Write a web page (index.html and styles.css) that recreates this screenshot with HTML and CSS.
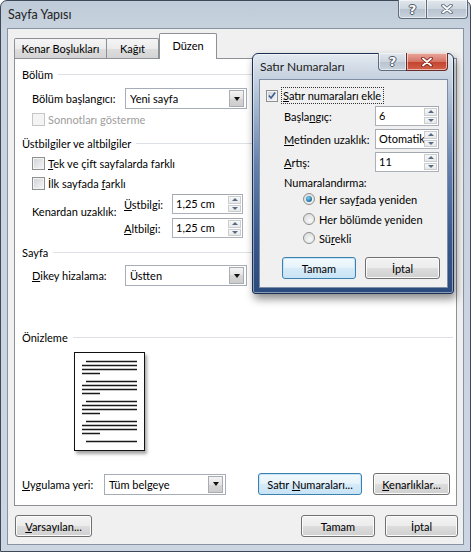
FILE: index.html
```html
<!DOCTYPE html>
<html lang="tr">
<head>
<meta charset="utf-8">
<title>Sayfa Yapısı</title>
<link rel="stylesheet" href="styles.css">
</head>
<body>
<div class="window">
  <div class="titlebar">
    <span class="title">Sayfa Yapısı</span>
    <div class="caption">
      <span class="capbtn help">?</span>
      <span class="capbtn close"><svg width="12" height="10" viewBox="0 0 12 10"><path d="M2 1.5 L10 8.5 M10 1.5 L2 8.5" stroke="#5b6776" stroke-width="3.6" stroke-linecap="round"/><path d="M2 1.5 L10 8.5 M10 1.5 L2 8.5" stroke="#fff" stroke-width="1.8" stroke-linecap="round"/></svg></span>
    </div>
  </div>
  <div class="client">
    <div class="tabs">
      <span class="tab t-kenar">Kenar Boşlukları</span>
      <span class="tab t-kagit">Kağıt</span>
      <span class="tab active t-duzen">Düzen</span>
    </div>
    <div class="panel">
      <div class="head">Bölüm</div>
      <div class="row ind r-start">
        <span class="lbl l-93">Bölüm başlan<u>g</u>ıcı:</span>
        <div class="combo"><span class="cval">Yeni sayfa</span><span class="ddbtn"><span class="tri"></span></span></div>
      </div>
      <div class="row ind chkrow r-sonnot">
        <span class="chk disabled"></span><span class="dtext">Sonnotları gösterme</span>
      </div>
      <div class="head h-ust">Üstbilgiler ve altbilgiler</div>
      <div class="row ind chkrow r-tek">
        <span class="chk"></span><span><u>T</u>ek ve çift sayfalarda farklı</span>
      </div>
      <div class="row ind chkrow r-ilk">
        <span class="chk"></span><span>İlk sayfada <u>f</u>arklı</span>
      </div>
      <div class="kenar ind">
        <span class="lbl l-92 kenar-lbl">Kenardan uzaklık:</span>
        <div class="spins">
          <div class="srow">
            <span class="lbl l-48"><u>Ü</u>stbilgi:</span>
            <div class="spin w-71"><span class="sval">1,25 cm</span><span class="spb"><span class="sup"><i class="up"></i></span><span class="sdn"><i class="dn"></i></span></span></div>
          </div>
          <div class="srow">
            <span class="lbl l-48"><u>A</u>ltbilgi:</span>
            <div class="spin w-71"><span class="sval">1,25 cm</span><span class="spb"><span class="sup"><i class="up"></i></span><span class="sdn"><i class="dn"></i></span></span></div>
          </div>
        </div>
      </div>
      <div class="head h-sayfa">Sayfa</div>
      <div class="row ind r-dikey">
        <span class="lbl l-93"><u>D</u>ikey hizalama:</span>
        <div class="combo"><span class="cval">Üstten</span><span class="ddbtn"><span class="tri"></span></span></div>
      </div>
      <div class="head h-oniz">Önizleme</div>
      <div class="preview">
        <div class="page">
          <svg width="69" height="97" viewBox="0 0 69 97">
            <g stroke="#1a1a1a" stroke-width="1.4">
              <path d="M11 8.5 H62 M7 12.5 H62 M7 16.5 H62 M7 20.5 H25"/>
              <path d="M11 28.5 H62 M7 32.5 H62 M7 36.5 H62 M7 40.5 H25"/>
              <path d="M11 48.5 H62 M7 52.5 H62 M7 56.5 H62 M7 60.5 H25"/>
              <path d="M11 68.5 H62 M7 72.5 H62 M7 76.5 H62 M7 80.5 H25"/>
              <path d="M11 88.5 H62"/>
            </g>
          </svg>
        </div>
      </div>
      <div class="row r-apply">
        <span class="lbl l-82"><u>U</u>ygulama yeri:</span>
        <div class="combo"><span class="cval">Tüm belgeye</span><span class="ddbtn"><span class="tri"></span></span></div>
        <span class="btn default b-satir"><span>Satır <u>N</u>umaraları...</span></span>
        <span class="btn b-kenar"><span><u>K</u>enarlıklar...</span></span>
      </div>
    </div>
    <div class="footer">
      <span class="btn b-vars"><span><u>V</u>arsayılan...</span></span>
      <span class="spacer"></span>
      <span class="btn b-ok"><span>Tamam</span></span>
      <span class="btn b-cancel"><span>İptal</span></span>
    </div>
  </div>

  <div class="subdlg">
    <div class="sub-title">
      <span class="sub-caption-text">Satır Numaraları</span>
      <div class="caption sub-caption">
        <span class="capbtn help sub-help">?</span>
        <span class="capbtn close red"><svg width="12" height="10" viewBox="0 0 12 10"><path d="M2 1.5 L10 8.5 M10 1.5 L2 8.5" stroke="#7a2118" stroke-width="3.6" stroke-linecap="round"/><path d="M2 1.5 L10 8.5 M10 1.5 L2 8.5" stroke="#fff" stroke-width="1.8" stroke-linecap="round"/></svg></span>
      </div>
    </div>
    <div class="sub-client">
      <div class="sub-chk">
        <span class="chk checked"><svg width="11" height="11" viewBox="0 0 11 11"><path d="M2 5.5 L4.5 8.3 L9 2.2" fill="none" stroke="#3d5f90" stroke-width="1.8"/></svg></span>
        <span class="focus"><u>S</u>atır numaraları ekle</span>
      </div>
      <div class="frow f1">
        <span class="flbl">Başla<u>n</u>gıç:</span>
        <div class="spin w-64"><span class="sval">6</span><span class="spb"><span class="sup"><i class="up"></i></span><span class="sdn"><i class="dn"></i></span></span></div>
      </div>
      <div class="frow">
        <span class="flbl"><u>M</u>etinden uzaklık:</span>
        <div class="spin w-64"><span class="sval">Otomatik</span><span class="spb"><span class="sup"><i class="up"></i></span><span class="sdn"><i class="dn"></i></span></span></div>
      </div>
      <div class="frow">
        <span class="flbl"><u>A</u>rtış:</span>
        <div class="spin w-64"><span class="sval">11</span><span class="spb"><span class="sup"><i class="up"></i></span><span class="sdn"><i class="dn"></i></span></span></div>
      </div>
      <div class="numhead">Numaralandırma:</div>
      <div class="radrow rr1"><span class="radio on"></span><span>Her say<u>f</u>ada yeniden</span></div>
      <div class="radrow rr2"><span class="radio"></span><span>Her bölümde yeniden</span></div>
      <div class="radrow rr3"><span class="radio"></span><span>Sü<u>r</u>ekli</span></div>
      <div class="sub-btns">
        <span class="btn default sb-ok"><span>Tamam</span></span>
        <span class="btn sb-cancel"><span>İptal</span></span>
      </div>
    </div>
  </div>
</div>
</body>
</html>
```

FILE: styles.css
```css
* { box-sizing: border-box; }
html, body { margin: 0; padding: 0; }
body {
  width: 471px;
  height: 552px;
  overflow: hidden;
  background: #ffffff;
  font-family: "Lato", "Noto Sans", sans-serif;
  font-size: 11px;
  color: #000;
}
u { text-decoration: underline; text-underline-offset: 1px; }

.window {
  position: relative;
  width: 471px;
  height: 552px;
  border: 1px solid #3e4856;
  border-radius: 7px 7px 0 0;
  background: linear-gradient(#bfcbd8, #c8d3df 30px, #cbd6e2);
  display: flex;
  flex-direction: column;
}
.titlebar {
  height: 27px;
  flex: none;
  display: flex;
  justify-content: space-between;
  align-items: flex-start;
  padding-left: 7px;
}
.title {
  font-size: 12.5px;
  line-height: 27px;
  color: #222;
}
.caption {
  display: flex;
  margin-top: -1px;
  margin-right: 2px;
}
.capbtn {
  height: 19px;
  display: flex;
  align-items: center;
  justify-content: center;
  border: 1px solid #5f6c7c;
  border-top: none;
  background: linear-gradient(#e2e7ed, #cdd5df 50%, #b8c3d0 50%, #c9d2dd);
  box-shadow: inset 0 0 0 1px rgba(255,255,255,0.55);
}
.capbtn.help {
  width: 28px;
  border-radius: 0 0 0 4px;
  border-right: none;
  color: #fff;
  font-family: "DejaVu Sans", sans-serif;
  font-weight: bold;
  font-size: 13px;
  text-shadow: 0 0 1px #4d5866, 1px 0 0 #4d5866, -1px 0 0 #4d5866, 0 1px 0 #4d5866, 0 -1px 0 #4d5866;
}
.capbtn.close {
  width: 42px;
  border-radius: 0 0 4px 0;
}

.client {
  flex: 1;
  margin: 0 6px 6px 6px;
  border: 1px solid #8793a3;
  background: #f0f0f0;
  display: flex;
  flex-direction: column;
  padding: 4px 0 7px 0;
}
.tabs {
  height: 25px;
  flex: none;
  display: flex;
  align-items: flex-end;
  padding-left: 6px;
}
.tab {
  height: 20px;
  border: 1px solid #8d9096;
  border-bottom: none;
  border-radius: 2px 2px 0 0;
  background: linear-gradient(#f5f5f5, #ececec 50%, #dedede 50%, #d4d4d4);
  text-align: center;
  line-height: 19px;
  margin-right: -1px;
}
.t-kenar { width: 93px; }
.t-kagit { width: 53px; }
.tab.active {
  position: relative;
  z-index: 1;
  height: 26px;
  margin-bottom: -1px;
  margin-left: 1px;
  width: 58px;
  background: #fff;
  line-height: 24px;
}

.panel {
  flex: 1;
  margin: 0 6px;
  border: 1px solid #8d9096;
  background: #fff;
  padding: 7px 3px 0 7px;
  display: flex;
  flex-direction: column;
}
.head {
  display: flex;
  align-items: center;
  height: 16px;
  gap: 5px;
}
.head::after {
  content: "";
  flex: 1;
  height: 1px;
  background: #dcdfe3;
}
.h-ust { margin-top: 8px; }
.h-sayfa { margin-top: 6px; }
.h-oniz { margin-top: 43px; }

.row { display: flex; align-items: center; }
.ind { margin-left: 10px; }
.r-start { height: 21px; margin-top: 6px; }
.r-sonnot { margin-top: 2px; }
.r-tek { margin-top: 4px; }
.r-ilk { margin-top: 4px; }
.r-dikey { height: 21px; margin-top: 5px; }
.chkrow { height: 16px; gap: 3px; }
.lbl { flex: none; white-space: nowrap; }
.l-93 { width: 93px; }
.l-92 { width: 92px; }
.l-48 { width: 48px; }
.l-82 { width: 82px; }
.dtext { color: #9d9d9d; }

.chk {
  width: 13px;
  height: 13px;
  flex: none;
  border: 1px solid #8e8f8f;
  background: linear-gradient(135deg, #cdd1d7, #f7f7f7);
  box-shadow: inset 0 0 0 1px #f3f3f3;
  display: flex;
  align-items: center;
  justify-content: center;
}
.chk.disabled {
  border-color: #c6c6c6;
  background: #f4f4f4;
  box-shadow: none;
}
.chk.checked { width: 12px; height: 12px; }

.combo {
  width: 122px;
  height: 21px;
  flex: none;
  border: 1px solid #a7adb6;
  background: #fff;
  display: flex;
  align-items: center;
  justify-content: space-between;
  padding: 1px;
}
.cval { padding-left: 3px; }
.ddbtn {
  width: 15px;
  height: 17px;
  border: 1px solid #a9adb3;
  background: linear-gradient(#f4f4f4, #e3e3e3 50%, #d6d6d6 50%, #cdcdcd);
  display: flex;
  align-items: center;
  justify-content: center;
  margin-right: 1px;
}
.tri {
  width: 0;
  height: 0;
  border-left: 3.5px solid transparent;
  border-right: 3.5px solid transparent;
  border-top: 4px solid #111;
}

.kenar {
  display: flex;
  margin-top: 3px;
  height: 44px;
}
.kenar-lbl { margin-top: 11px; }
.spins { display: flex; flex-direction: column; gap: 4px; }
.srow { display: flex; align-items: center; height: 20px; }

.spin {
  height: 20px;
  border: 1px solid #abb0b8;
  border-top-color: #a3a8b0;
  background: #fff;
  display: flex;
  align-items: stretch;
  justify-content: space-between;
  padding: 1px;
}
.w-71 { width: 71px; }
.w-64 { width: 64px; }
.sval { padding-left: 2px; line-height: 16px; white-space: nowrap; overflow: hidden; }
.spb {
  width: 13px;
  flex: none;
  display: flex;
  flex-direction: column;
  gap: 1px;
}
.sup, .sdn {
  flex: 1;
  border: 1px solid #c9ccd1;
  background: linear-gradient(#f7f7f7, #e8e8e8);
  display: flex;
  align-items: center;
  justify-content: center;
}
.up, .dn {
  display: block;
  width: 0;
  height: 0;
  border-left: 3px solid transparent;
  border-right: 3px solid transparent;
}
.up { border-bottom: 3px solid #566a86; }
.dn { border-top: 3px solid #566a86; }

.preview { margin-top: 7px; margin-left: 52px; height: 101px; }
.page {
  width: 71px;
  height: 99px;
  border: 1px solid #111;
  background: #fff;
  box-shadow: 2px 3px 3px rgba(0,0,0,0.35);
}
.page svg { display: block; }

.r-apply { margin-top: 20px; height: 22px; }
.b-satir { margin-left: 32px; width: 104px; }
.b-kenar { margin-left: 11px; width: 77px; }

.btn {
  height: 22px;
  flex: none;
  display: flex;
  align-items: center;
  justify-content: center;
  border: 1px solid #707070;
  border-radius: 3px;
  background: linear-gradient(#f3f3f3, #ececec 50%, #dddddd 50%, #d0d0d0);
  box-shadow: inset 0 0 0 1px #fbfbfb;
  white-space: nowrap;
}
.btn.default {
  border-color: #3c7fb1;
  background: linear-gradient(#f3f9fd, #e5f2fb 50%, #d6ebf8 50%, #c9e3f5);
  box-shadow: inset 0 0 0 1px #c6e6f8;
}

.footer {
  flex: none;
  display: flex;
  margin-top: 9px;
  padding: 0 5px 0 7px;
  height: 22px;
}
.spacer { flex: 1; }
.b-vars { width: 77px; }
.b-ok { width: 74px; }
.b-cancel { width: 73px; margin-left: 10px; }

/* Nested dialog window sitting on top of the main dialog */
.subdlg {
  position: absolute;
  left: 251px;
  top: 52px;
  width: 202px;
  height: 241px;
  border: 1px solid #1c2f52;
  border-radius: 6px 6px 3px 3px;
  background: linear-gradient(#e3e9f0, #cdd7e3 18px, #aebfd3 45px, #6582ad 110px, #3a5a8e 180px, #2b4a7e);
  box-shadow: 2px 5px 9px rgba(0,0,0,0.45), inset 0 0 0 1px rgba(255,255,255,0.45);
  display: flex;
  flex-direction: column;
  z-index: 5;
}
.sub-title {
  height: 25px;
  flex: none;
  display: flex;
  justify-content: space-between;
  align-items: flex-start;
  padding-left: 7px;
}
.sub-caption-text {
  font-size: 12px;
  line-height: 25px;
  color: #222;
}
.sub-caption { margin-right: 5px; margin-top: -1px; }
.sub-caption .capbtn { height: 18px; }
.sub-help { width: 27px; }
.capbtn.close.red {
  width: 42px;
  border-color: #6b2a25;
  background: linear-gradient(#e9a99d, #d47566 50%, #c2412d 50%, #d2614a);
}
.sub-client {
  flex: 1;
  margin: 0 5px 5px 6px;
  border: 1px solid #7d8ea6;
  background: #f0f0f0;
  display: flex;
  flex-direction: column;
}
.sub-chk {
  display: flex;
  align-items: center;
  height: 17px;
  margin-top: 7px;
  padding-left: 6px;
  gap: 3px;
}
.focus {
  border: 1px dotted #333;
  padding: 0 2px 0 1px;
  line-height: 15px;
}
.frow {
  display: flex;
  align-items: center;
  height: 20px;
  margin-top: 3px;
  padding-left: 24px;
}
.frow.f1 { margin-top: 2px; }
.flbl { width: 91px; flex: none; white-space: nowrap; }
.numhead {
  height: 16px;
  line-height: 16px;
  margin-top: 3px;
  padding-left: 24px;
}
.radrow {
  display: flex;
  align-items: center;
  height: 16px;
  padding-left: 43px;
  gap: 4px;
}
.rr2 { margin-top: 4px; }
.rr3 { margin-top: 3px; }
.radio {
  width: 12px;
  height: 12px;
  flex: none;
  border-radius: 50%;
  border: 1px solid #8e8f8f;
  background: radial-gradient(circle at 60% 65%, #f8f8f8, #d3d6da);
  display: flex;
  align-items: center;
  justify-content: center;
}
.radio.on::after {
  content: "";
  width: 6px;
  height: 6px;
  border-radius: 50%;
  background: radial-gradient(circle at 40% 35%, #7fd0f2, #1b6f9b 70%, #134d70);
}
.sub-btns {
  display: flex;
  margin-top: 11px;
  padding-left: 22px;
  gap: 9px;
}
.sb-ok { width: 74px; }
.sb-cancel { width: 75px; }
```
